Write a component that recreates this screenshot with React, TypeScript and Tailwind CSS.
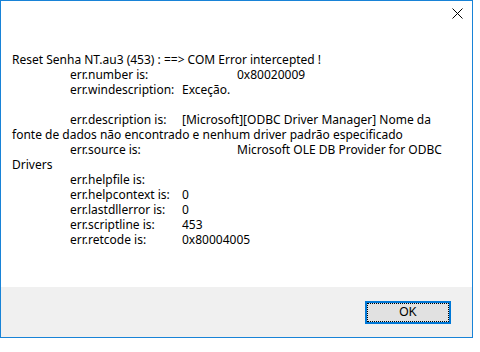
type Line = { lead?: string; label?: string; wide?: boolean; value?: string }

// Message text, laid out on the dialog's tab stops (12 / 70 / 182 / 237).
const lines: Line[] = [
  { lead: 'Reset Senha NT.au3 (453) : ==> COM Error intercepted !' },
  { label: 'err.number is:', wide: true, value: '0x80020009' },
  { label: 'err.windescription:', value: 'Exceção.' },
  {},
  { label: 'err.description is:', value: '[Microsoft][ODBC Driver Manager] Nome da' },
  { lead: 'fonte de dados não encontrado e nenhum driver padrão especificado' },
  { label: 'err.source is:', wide: true, value: 'Microsoft OLE DB Provider for ODBC' },
  { lead: 'Drivers' },
  { label: 'err.helpfile is:' },
  { label: 'err.helpcontext is:', value: '0' },
  { label: 'err.lastdllerror is:', value: '0' },
  { label: 'err.scriptline is:', value: '453' },
  { label: 'err.retcode is:', value: '0x80004005' },
]

function MessageLine({ line }: { line: Line }) {
  if (line.lead !== undefined) return <div className="h-[15px] whitespace-nowrap">{line.lead}</div>
  if (!line.label) return <div className="h-[15px]" />
  return (
    <div className="flex h-[15px] whitespace-nowrap pl-[58px]">
      <span className={line.wide ? 'w-[167px] shrink-0' : 'w-[112px] shrink-0'}>{line.label}</span>
      {line.value && <span>{line.value}</span>}
    </div>
  )
}

export default function App() {
  return (
    <div className="h-[352px] w-[480px] bg-white font-['Noto_Sans',sans-serif] text-[12px] leading-[15px] text-black">
      <div className="flex h-[338px] w-[473px] flex-col border border-[#1883d7] bg-white">
        <div className="flex h-[24px] justify-end pr-[9px] pt-[7px]">
          <svg width="11" height="11" viewBox="0 0 11 11" className="shrink-0">
            <path d="M0.5 0.5L10.5 10.5M10.5 0.5L0.5 10.5" stroke="#000" strokeWidth="1" fill="none" />
          </svg>
        </div>
        <div className="flex-1 px-[11px] pt-[27px]">
          {lines.map((l, i) => (
            <MessageLine key={i} line={l} />
          ))}
        </div>
        <div className="flex h-[50px] justify-end bg-[#f0f0f0] pr-[21px] pt-[14px]">
          <button
            type="button"
            className="h-[23px] w-[86px] border-2 border-[#0078d7] bg-[#e1e1e1] p-0"
          >
            <span className="flex h-full w-full items-center justify-center border border-dotted border-black font-['Liberation_Sans',sans-serif] text-[12px]">
              OK
            </span>
          </button>
        </div>
      </div>
    </div>
  )
}
